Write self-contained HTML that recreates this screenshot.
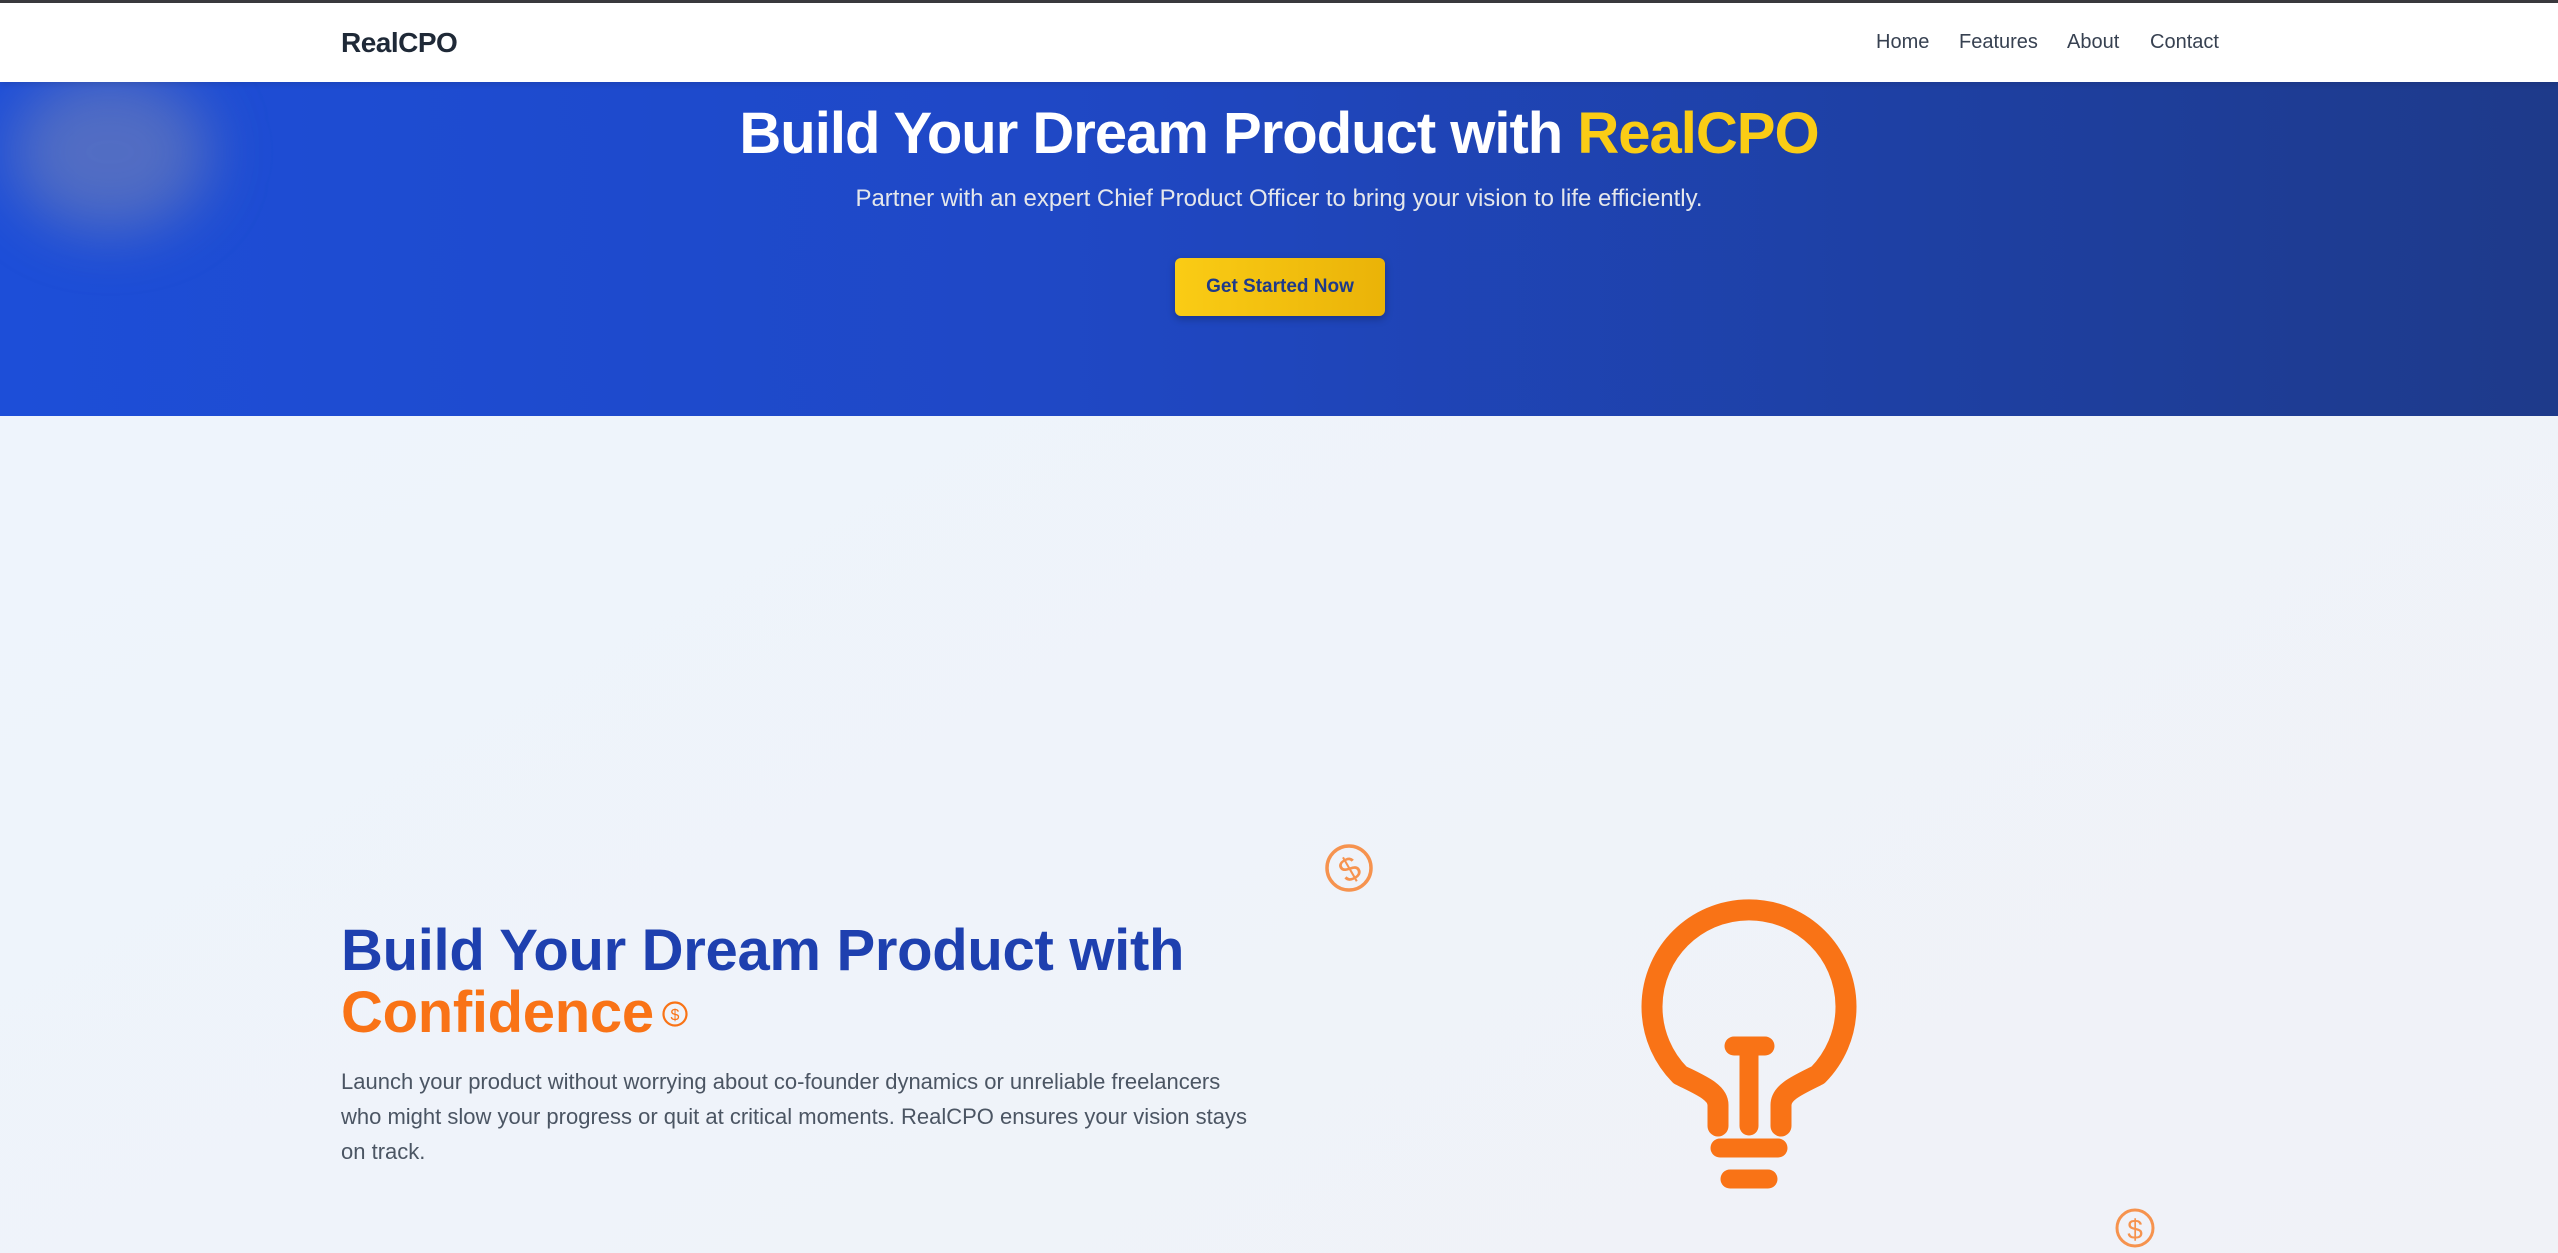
<!DOCTYPE html>
<html><head><meta charset="utf-8"><style>
*{margin:0;padding:0;box-sizing:border-box}
body{width:2558px;height:1253px;overflow:hidden;font-family:"Liberation Sans",sans-serif;background:#eff3fa;position:relative}
.topb{position:absolute;left:0;top:0;width:100%;height:3px;background:#3a3a3e}
nav{position:absolute;top:3px;left:0;width:100%;height:79px;background:#fff;box-shadow:0 2px 6px rgba(0,0,0,.12);z-index:2}
.logo{position:absolute;left:341px;top:24px;font-size:28px;font-weight:bold;color:#1f2937;letter-spacing:-0.5px}
.links{position:absolute;top:28px;left:1876px;font-size:20px;color:#374151}
.links span{position:absolute;white-space:nowrap}
.hero{position:absolute;top:82px;left:0;width:100%;height:334px;background:linear-gradient(90deg,#1d4ed8 0%,#1f48c6 40%,#1e3a8a 100%);overflow:hidden}
.blob{position:absolute;left:10px;top:-10px;width:200px;height:160px;border-radius:50%;background:rgba(180,170,160,.35);filter:blur(30px)}
.h1{position:absolute;top:18px;width:100%;text-align:center;color:#fff;font-size:58px;font-weight:bold;letter-spacing:-1px}
.h1 b{color:#facc15}
.sub{position:absolute;top:103px;width:100%;text-align:center;color:#e5e7eb;font-size:24px}
.btn{position:absolute;left:1175px;top:176px;width:210px;height:58px;border-radius:6px;background:linear-gradient(90deg,#facc15,#eab308);color:#1e3a8a;font-weight:bold;font-size:19px;text-align:center;line-height:58px;box-shadow:0 3px 8px rgba(0,0,0,.25)}
.low{position:absolute;top:416px;left:0;width:100%;height:837px;background:linear-gradient(150deg,#eef4fc,#f0f2f7)}
.h2{position:absolute;left:341px;top:920px;font-size:58px;font-weight:bold;color:#1e40af;line-height:62px;letter-spacing:-0.3px}
.h2 .o{color:#f97316}
.p{position:absolute;left:341px;top:1064px;white-space:nowrap;font-size:22px;line-height:35px;color:#4b5563}
</style></head><body>
<div class="topb"></div>
<nav><div class="logo">RealCPO</div>
<div class="links"><span style="left:0">Home</span><span style="left:83px">Features</span><span style="left:191px">About</span><span style="left:274px">Contact</span></div></nav>
<div class="hero"><div class="blob"></div>
<div class="h1">Build Your Dream Product with <b>RealCPO</b></div>
<div class="sub">Partner with an expert Chief Product Officer to bring your vision to life efficiently.</div>
<div class="btn">Get Started Now</div></div>
<div class="low"></div>
<div class="h2">Build Your Dream Product with<br><span class="o">Confidence</span></div>
<svg style="position:absolute;left:661px;top:1000px" width="28" height="28" viewBox="0 0 28 28"><circle cx="14" cy="14" r="11.5" fill="none" stroke="#f97316" stroke-width="2.2"/><text x="14" y="20" font-size="16" text-anchor="middle" fill="#f97316" font-family="Liberation Sans">$</text></svg>
<div class="p">Launch your product without worrying about co-founder dynamics or unreliable freelancers<br>who might slow your progress or quit at critical moments. RealCPO ensures your vision stays<br>on track.</div>
<svg style="position:absolute;left:0;top:0" width="2558" height="1253">
<g fill="none" stroke="#f97316" stroke-linecap="round" stroke-linejoin="round">
<path d="M1718 1126 V1105 C1718 1092 1700 1085 1680 1075 A97 97 0 1 1 1818 1075 C1798 1085 1781 1092 1781 1105 V1126" stroke-width="21"/>
<path d="M1734 1046 H1765 M1749 1046 V1126" stroke-width="19"/>
<path d="M1720 1148 H1778" stroke-width="19"/>
<path d="M1730 1179 H1768" stroke-width="19"/>
</g>
<g opacity=".75">
<circle cx="1349" cy="868" r="22" fill="none" stroke="#f97316" stroke-width="3.5"/>
<text x="1349" y="881" font-size="34" text-anchor="middle" fill="#f97316" font-family="Liberation Sans" transform="rotate(-30 1349 868)">$</text>
<circle cx="2135" cy="1228" r="18" fill="none" stroke="#f97316" stroke-width="3"/>
<text x="2135" y="1239" font-size="28" text-anchor="middle" fill="#f97316" font-family="Liberation Sans">$</text>
</g>
</svg>
</body></html>
